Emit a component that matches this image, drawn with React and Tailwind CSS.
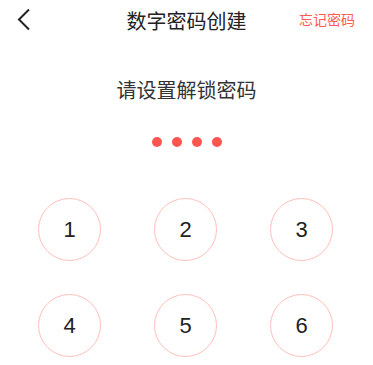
import React from "react";

const rows = [
  ["1", "2", "3"],
  ["4", "5", "6"],
];

const App = () => {
  return (
    <div
      className="w-[373px] h-[365px] bg-white overflow-hidden"
      style={{ fontFamily: '"Noto Sans CJK SC", "Liberation Sans", sans-serif' }}
    >
      {/* header */}
      <div className="relative h-[42px] flex items-center justify-center">
        <svg
          className="absolute left-[17px] top-[8px]"
          width="14"
          height="23"
          viewBox="0 0 14 23"
          fill="none"
        >
          <path d="M12 1.5L2 11.5L12 21.5" stroke="#222" strokeWidth="2" />
        </svg>
        <h1 className="text-[20px] leading-none font-normal text-[#222]">数字密码创建</h1>
        <span className="absolute right-[18px] top-[12px] text-[14px] leading-none text-[#ff5a52]">
          忘记密码
        </span>
      </div>

      {/* prompt */}
      <p className="mt-[38px] text-center text-[20px] leading-none text-[#333]">请设置解锁密码</p>

      {/* dots */}
      <div className="mt-[37px] flex justify-center gap-[10px]">
        {[0, 1, 2, 3].map((i) => (
          <span key={i} className="block w-[10px] h-[10px] rounded-full bg-[#ff5750]" />
        ))}
      </div>

      {/* keypad */}
      <div className="mt-[51px] flex flex-col gap-[33px]">
        {rows.map((row, r) => (
          <div key={r} className="flex pl-[38px] gap-[53px]">
            {row.map((n) => (
              <div
                key={n}
                className="w-[63px] h-[63px] rounded-full border-[1.5px] border-[#ffc0ba] flex items-center justify-center text-[22px] text-[#222]"
                style={{ fontFamily: '"Liberation Sans", sans-serif' }}
              >
                {n}
              </div>
            ))}
          </div>
        ))}
      </div>
    </div>
  );
};

export default App;
